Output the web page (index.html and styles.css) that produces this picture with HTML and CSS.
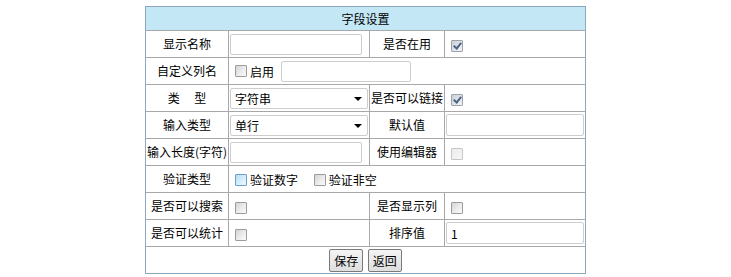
FILE: index.html
```html
<!DOCTYPE html>
<html lang="zh-CN">
<head>
    <meta charset="UTF-8">
    <title>字段设置</title>
    <link rel="stylesheet" href="styles.css">
</head>
<body>
    <form id="fieldForm" action="#" method="post">
        <table class="form-table">
            <colgroup>
                <col class="col-label">
                <col class="col-field">
                <col class="col-label2">
                <col class="col-field">
            </colgroup>
            <tr>
                <th colspan="4" class="title">字段设置</th>
            </tr>
            <tr>
                <td class="label">显示名称</td>
                <td><input type="text" class="txt" name="display_name"></td>
                <td class="label">是否在用</td>
                <td><input type="checkbox" class="chk" name="in_use" checked></td>
            </tr>
            <tr>
                <td class="label">自定义列名</td>
                <td colspan="3"><input type="checkbox" class="chk" name="custom_on"><span class="chk-text">启用</span> <input type="text" class="txt txt-custom" name="custom_name"></td>
            </tr>
            <tr>
                <td class="label">类　&nbsp;型</td>
                <td>
                    <span class="select-wrap">
                        <select class="sel" name="type">
                            <option value="string" selected>字符串</option>
                            <option value="int">整数</option>
                            <option value="date">日期</option>
                        </select>
                    </span>
                </td>
                <td class="label">是否可以链接</td>
                <td><input type="checkbox" class="chk" name="linkable" checked></td>
            </tr>
            <tr>
                <td class="label">输入类型</td>
                <td>
                    <span class="select-wrap">
                        <select class="sel" name="input_type">
                            <option value="single" selected>单行</option>
                            <option value="multi">多行</option>
                        </select>
                    </span>
                </td>
                <td class="label">默认值</td>
                <td><input type="text" class="txt txt-wide" name="default_value"></td>
            </tr>
            <tr>
                <td class="label">输入长度(字符)</td>
                <td><input type="text" class="txt" name="max_length"></td>
                <td class="label">使用编辑器</td>
                <td><input type="checkbox" class="chk" name="use_editor" disabled></td>
            </tr>
            <tr>
                <td class="label">验证类型</td>
                <td colspan="3">
                    <input type="checkbox" class="chk chk-hover" name="check_number"><span class="chk-text">验证数字</span>
                    <input type="checkbox" class="chk chk-second" name="check_required"><span class="chk-text">验证非空</span>
                </td>
            </tr>
            <tr>
                <td class="label">是否可以搜索</td>
                <td><input type="checkbox" class="chk" name="searchable"></td>
                <td class="label">是否显示列</td>
                <td><input type="checkbox" class="chk" name="show_column"></td>
            </tr>
            <tr>
                <td class="label">是否可以统计</td>
                <td><input type="checkbox" class="chk" name="countable"></td>
                <td class="label">排序值</td>
                <td><input type="text" class="txt txt-wide" name="sort" value="1"></td>
            </tr>
            <tr>
                <td colspan="4" class="actions">
                    <button type="submit" class="btn">保存</button>
                    <button type="button" class="btn">返回</button>
                </td>
            </tr>
        </table>
    </form>
</body>
</html>
```

FILE: styles.css
```css
body {
    font-family: "Noto Sans CJK SC", "Liberation Sans", sans-serif;
    font-size: 12px;
    line-height: 16px;
    color: #000;
    background-color: #fff;
    margin: 6px 0 0;
    padding: 0;
}

.form-table {
    width: 441px;
    margin: 0 auto;
    table-layout: fixed;
    border: 1px solid #8fa6c1;
    border-spacing: 0;
}

.col-label {
    width: 82px;
}

.col-field {
    width: 141px;
}

.col-label2 {
    width: 75px;
}

.form-table th,
.form-table td {
    padding: 0 1px;
    height: 26px;
    border-top: 1px solid #a8a8a8;
    border-left: 1px solid #a8a8a8;
    white-space: nowrap;
    vertical-align: middle;
}

.form-table td:first-child,
.form-table th {
    border-left: none;
}

.form-table th.title {
    height: 23px;
    border-top: none;
    font-weight: normal;
    text-align: center;
    background-color: #c4e7f5;
}

.form-table td.label {
    text-align: center;
    overflow: visible;
}

.txt {
    width: 132px;
    height: 21px;
    padding: 0 4px;
    margin: 0;
    border: 1px solid #cdcdcd;
    border-radius: 2px;
    box-sizing: border-box;
    font-family: inherit;
    font-size: 12px;
    vertical-align: middle;
}

.txt-custom {
    width: 130px;
    margin-left: 4px;
}

.txt-wide {
    width: 138px;
    height: 22px;
}

.chk {
    appearance: none;
    -webkit-appearance: none;
    position: relative;
    width: 12px;
    height: 12px;
    margin: 0 3px 0 5px;
    border: 1px solid #9c9c9c;
    border-radius: 1px;
    box-sizing: border-box;
    background: linear-gradient(135deg, #d4d4d4 0%, #ececec 55%, #fafafa 100%);
    vertical-align: middle;
}

.chk:checked {
    border-color: #9ea3aa;
    background: linear-gradient(135deg, #c9ced6 0%, #e2e6ec 60%, #f2f4f7 100%);
}

.chk:checked::after {
    content: "";
    position: absolute;
    left: 3px;
    top: 0;
    width: 3px;
    height: 6px;
    border-right: 2px solid #4c6586;
    border-bottom: 2px solid #4c6586;
    transform: rotate(40deg);
}

.chk:disabled {
    border-color: #c6c6c6;
    background: linear-gradient(135deg, #ececec 0%, #f6f6f6 100%);
}

.chk-hover {
    border-color: #6f9fc9;
    background: linear-gradient(135deg, #b6def6 0%, #d6eefb 55%, #eef8fe 100%);
}

.chk-second {
    margin-left: 13px;
}

.chk-text {
    vertical-align: middle;
}

.select-wrap {
    position: relative;
    display: inline-block;
    vertical-align: middle;
}

.select-wrap::after {
    content: "";
    position: absolute;
    right: 6px;
    top: 9px;
    border-left: 4px solid transparent;
    border-right: 4px solid transparent;
    border-top: 4px solid #000;
    pointer-events: none;
}

.sel {
    appearance: none;
    -webkit-appearance: none;
    display: block;
    width: 138px;
    height: 21px;
    padding: 0 4px;
    margin: 0;
    border: 1px solid #cdcdcd;
    border-radius: 2px;
    background-color: #fff;
    font-family: inherit;
    font-size: 12px;
    color: #000;
}

.actions {
    height: 25px;
    text-align: center;
}

.btn {
    height: 23px;
    padding: 0 4px;
    margin: 0 1px;
    border: 1px solid #7a7a7a;
    border-radius: 2px;
    background: linear-gradient(#f4f4f4, #dedede);
    font-family: inherit;
    font-size: 12px;
    color: #000;
    cursor: pointer;
    vertical-align: middle;
}

.btn:hover {
    background: linear-gradient(#eaf6fd, #bee6fd);
    border-color: #3c7fb1;
}
```
